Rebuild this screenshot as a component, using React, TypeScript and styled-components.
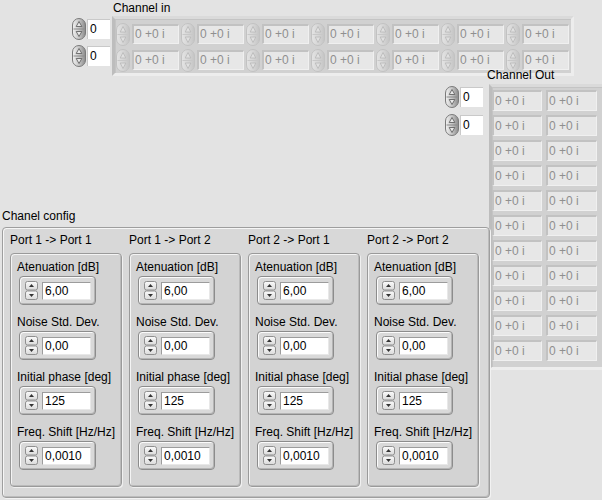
import React from 'react';
import styled, { createGlobalStyle } from 'styled-components';

const Global = createGlobalStyle`
  html, body { margin: 0; padding: 0; background: #e3e3e3; }
  body { font-family: "Liberation Sans", Arial, sans-serif; font-size: 12px; color: #000; }
`;

const Page = styled.div`
  width: 602px;
  height: 500px;
  overflow: hidden;
  background: #e3e3e3;
  display: flex;
  flex-direction: column;
`;

const Label = styled.div<{ $ml?: number }>`
  line-height: 14px;
  height: 14px;
  white-space: nowrap;
  margin-left: ${p => p.$ml ?? 0}px;
`;

/* ---------- spinners ---------- */

const RoundSpinner: React.FC<{ disabled?: boolean; h?: number }> = ({ disabled, h = 22 }) => {
  const id = disabled ? 'rsd' : 'rs';
  const mid = h / 2;
  return (
    <svg width="14" height={h} viewBox={`0 0 14 ${h}`} style={{ flex: 'none' }}>
      <defs>
        <linearGradient id={id} x1="0" x2="1" y1="0" y2="0">
          <stop offset="0" stopColor={disabled ? '#e4e4e4' : '#f2f2f2'} />
          <stop offset="0.5" stopColor={disabled ? '#d6d6d6' : '#c6c6c6'} />
          <stop offset="1" stopColor={disabled ? '#c4c4c4' : '#8a8a8a'} />
        </linearGradient>
      </defs>
      <rect x="0.5" y="0.5" width="13" height={h - 1} rx="6.5" fill={`url(#${id})`} stroke={disabled ? '#c2c2c2' : '#7a7a7a'} />
      <line x1="1.5" y1={mid} x2="12.5" y2={mid} stroke={disabled ? '#c8c8c8' : '#8a8a8a'} />
      <path d={`M7 3.5 L9.8 ${mid - 2.5} L4.2 ${mid - 2.5} Z`} fill={disabled ? '#e0e0e0' : '#e8e8e8'} stroke={disabled ? '#b8b8b8' : '#555'} strokeWidth="0.8" />
      <path d={`M7 ${h - 3.5} L9.8 ${mid + 2.5} L4.2 ${mid + 2.5} Z`} fill={disabled ? '#e0e0e0' : '#e8e8e8'} stroke={disabled ? '#b8b8b8' : '#555'} strokeWidth="0.8" />
    </svg>
  );
};

const BoxSpinner: React.FC = () => (
  <svg width="13" height="19" viewBox="0 0 13 19" style={{ flex: 'none' }}>
    <defs>
      <linearGradient id="bs" x1="0" x2="0" y1="0" y2="1">
        <stop offset="0" stopColor="#fbfbfb" />
        <stop offset="1" stopColor="#dadada" />
      </linearGradient>
    </defs>
    <rect x="0.5" y="0.5" width="12" height="8.5" rx="2" fill="url(#bs)" stroke="#8f8f8f" />
    <rect x="0.5" y="10" width="12" height="8.5" rx="2" fill="url(#bs)" stroke="#8f8f8f" />
    <path d="M6.5 3 L9 6 L4 6 Z" fill="#333" />
    <path d="M6.5 16 L9 13 L4 13 Z" fill="#333" />
  </svg>
);

/* ---------- index controls ---------- */

const IndexStack = styled.div<{ $gap: number; $mt?: number }>`
  display: flex;
  flex-direction: column;
  gap: ${p => p.$gap}px;
  margin-top: ${p => p.$mt ?? 0}px;
`;

const IndexControl = styled.div`
  display: flex;
  align-items: center;
  height: 22px;
`;

const IndexBox = styled.div`
  width: 23px;
  height: 20px;
  margin-left: 1px;
  background: #fff;
  border-top: 1px solid #c9c9c9;
  border-left: 1px solid #c9c9c9;
  box-sizing: border-box;
  line-height: 18px;
  padding-left: 2px;
`;

const Index: React.FC = () => (
  <IndexControl>
    <RoundSpinner />
    <IndexBox>0</IndexBox>
  </IndexControl>
);

/* ---------- arrays ---------- */

const ArrayFrame = styled.div<{ $w: number; $h: number; $mt?: number }>`
  width: ${p => p.$w}px;
  height: ${p => p.$h}px;
  margin-top: ${p => p.$mt ?? 0}px;
  box-sizing: border-box;
  background: #d1d1d1;
  border-style: solid;
  border-width: 3px;
  border-color: #dadada #ededed #ededed #bdbdbd;
  box-shadow: inset 1px 1px 0 #c4c4c4;
`;

const InGrid = styled.div`
  display: grid;
  grid-template-columns: repeat(7, 65px);
  grid-auto-rows: 24px;
  row-gap: 2px;
  padding: 3px 0 0 1px;
`;

const InCell = styled.div`
  display: flex;
  align-items: center;
  gap: 2px;
`;

const ValueBox = styled.div<{ $w: number; $h: number }>`
  width: ${p => p.$w}px;
  height: ${p => p.$h}px;
  box-sizing: border-box;
  background: #e7e7e7;
  color: #8f8f8f;
  border-style: solid;
  border-width: 2px 1px 1px 2px;
  border-color: #c2c2c2 #f0f0f0 #f0f0f0 #c2c2c2;
  line-height: ${p => p.$h - 3}px;
  padding-left: 1px;
  white-space: nowrap;
`;

const OutGrid = styled.div`
  display: grid;
  grid-template-columns: 50px 51px;
  column-gap: 4px;
  grid-auto-rows: 21px;
  row-gap: 4px;
  padding: 3px 0 0 0;
`;

/* ---------- layout sections ---------- */

const TopSection = styled.div`
  display: grid;
  grid-template-columns: 40px auto;
  margin-left: 72px;
  padding-top: 1px;
`;

const LowerSection = styled.div`
  display: grid;
  grid-template-columns: 445px 44px 113px;
  grid-template-rows: 16px 125px auto;
  margin-top: -8px;
`;

const OutLabelCell = styled.div`
  grid-column: 3;
  grid-row: 1;
  margin-left: -2px;
  position: relative;
`;

const OutIndexCell = styled.div`
  grid-column: 2;
  grid-row: 2;
`;

const OutArrayCell = styled.div`
  grid-column: 3;
  grid-row: 2 / 4;
`;

const ConfigCell = styled.div`
  grid-column: 1 / 3;
  grid-row: 3;
  margin-left: 2px;
  display: flex;
  flex-direction: column;
  gap: 4px;
`;

/* ---------- cluster ---------- */

const ConfigFrame = styled.div`
  width: 488px;
  box-sizing: border-box;
  background: #d8d8d8;
  border: 1px solid #9e9e9e;
  border-radius: 4px;
  box-shadow: inset 1px 1px 0 #f6f6f6, inset -1px -1px 0 #bcbcbc, 1px 1px 0 #f2f2f2;
  padding: 5px 0 10px 7px;
  display: flex;
  gap: 7px;
`;

const PortColumn = styled.div`
  width: 112px;
  display: flex;
  flex-direction: column;
  gap: 6px;
`;

const PortGroup = styled.div`
  box-sizing: border-box;
  background: #d3d3d3;
  border: 1px solid #9a9a9a;
  border-radius: 4px;
  box-shadow: inset 1px 1px 0 #f4f4f4, inset -1px -1px 0 #bababa, 1px 1px 0 #f0f0f0;
  padding: 6px 0 16px 6px;
  display: flex;
  flex-direction: column;
  gap: 10px;
`;

const Field = styled.div`
  display: flex;
  flex-direction: column;
  gap: 2px;
`;

const NumFrame = styled.div`
  width: 77px;
  height: 29px;
  margin-left: 2px;
  box-sizing: border-box;
  background: #d9d9d9;
  border: 1px solid #8c8c8c;
  border-radius: 4px;
  box-shadow: inset 1px 1px 0 #fbfbfb, inset -1px -1px 0 #b4b4b4;
  display: flex;
  align-items: center;
  padding-left: 5px;
  gap: 4px;
`;

const NumBox = styled.div`
  width: 49px;
  height: 18px;
  box-sizing: border-box;
  background: #fff;
  border-style: solid;
  border-width: 1px;
  border-color: #9c9c9c #e8e8e8 #e8e8e8 #9c9c9c;
  line-height: 16px;
  padding-left: 2px;
  white-space: nowrap;
`;

const fields = [
  { label: 'Atenuation [dB]', value: '6,00' },
  { label: 'Noise Std. Dev.', value: '0,00' },
  { label: 'Initial phase [deg]', value: '125' },
  { label: 'Freq. Shift [Hz/Hz]', value: '0,0010' },
];

const ports = ['Port 1 -> Port 1', 'Port 1 -> Port 2', 'Port 2 -> Port 1', 'Port 2 -> Port 2'];

export default function App() {
  return (
    <>
      <Global />
      <Page>
        <TopSection>
          <div />
          <Label $ml={1}>Channel in</Label>
          <IndexStack $gap={5} $mt={3}>
            <Index />
            <Index />
          </IndexStack>
          <ArrayFrame $w={462} $h={60} $mt={1}>
            <InGrid>
              {Array.from({ length: 14 }).map((_, i) => (
                <InCell key={i}>
                  <RoundSpinner disabled h={23} />
                  <ValueBox $w={47} $h={20}>0 +0 i</ValueBox>
                </InCell>
              ))}
            </InGrid>
          </ArrayFrame>
        </TopSection>

        <LowerSection>
          <OutLabelCell>
            <Label>Channel Out</Label>
          </OutLabelCell>
          <OutIndexCell>
            <IndexStack $gap={6} $mt={2}>
              <Index />
              <Index />
            </IndexStack>
          </OutIndexCell>
          <OutArrayCell>
            <ArrayFrame $w={118} $h={286}>
              <OutGrid>
                {Array.from({ length: 22 }).map((_, i) => (
                  <ValueBox key={i} $w={i % 2 ? 51 : 50} $h={21}>0 +0 i</ValueBox>
                ))}
              </OutGrid>
            </ArrayFrame>
          </OutArrayCell>
          <ConfigCell>
            <Label>Chanel config</Label>
            <ConfigFrame>
              {ports.map(p => (
                <PortColumn key={p}>
                  <Label>{p}</Label>
                  <PortGroup>
                    {fields.map(f => (
                      <Field key={f.label}>
                        <Label>{f.label}</Label>
                        <NumFrame>
                          <BoxSpinner />
                          <NumBox>{f.value}</NumBox>
                        </NumFrame>
                      </Field>
                    ))}
                  </PortGroup>
                </PortColumn>
              ))}
            </ConfigFrame>
          </ConfigCell>
        </LowerSection>
      </Page>
    </>
  );
}
